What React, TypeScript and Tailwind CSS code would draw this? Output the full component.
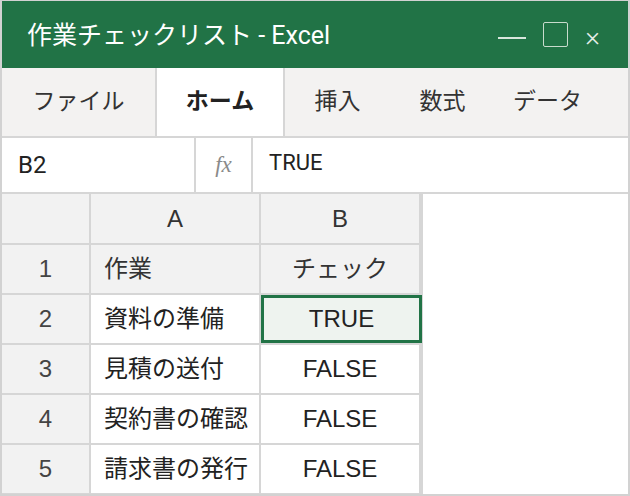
import { Fragment } from 'react';

const UI_FONT = "font-['Roboto','Noto_Sans_CJK_JP',sans-serif]";
const CELL_FONT = "font-['Liberation_Sans','Noto_Sans_CJK_JP',sans-serif]";

const tabs = [
  { label: 'ファイル', width: 'w-[153px]' },
  { label: 'ホーム', width: 'w-[130px]', active: true },
  { label: '挿入', width: 'w-[105px]' },
  { label: '数式', width: 'w-[105px]' },
  { label: 'データ', width: 'w-[105px]' },
];

const rows = [
  { n: '1', task: '作業', check: 'チェック', head: true },
  { n: '2', task: '資料の準備', check: 'TRUE', selected: true },
  { n: '3', task: '見積の送付', check: 'FALSE' },
  { n: '4', task: '契約書の確認', check: 'FALSE' },
  { n: '5', task: '請求書の発行', check: 'FALSE' },
];

export default function App() {
  return (
    <div className={`flex h-[496px] w-[630px] flex-col overflow-hidden border-2 border-t border-[#d2d2d2] bg-white ${UI_FONT}`}>
      {/* title bar */}
      <div className="flex h-[67px] shrink-0 items-center bg-[#217346] pl-[25px] pr-[28px] text-white">
        <span className="mt-[2px] text-[25px]">作業チェックリスト - Excel</span>
        <div className="ml-auto flex items-center">
          <span className="mt-[6px] h-[2px] w-[28px] bg-[#d8e6dc]" />
          <span className="ml-[17px] h-[25px] w-[25px] rounded-[2px] border-[1.5px] border-[#c9dccd]" />
          <span className="ml-[17px] mt-[5px] text-[28px] font-light leading-none text-[#e4eee7]">×</span>
        </div>
      </div>

      {/* ribbon tabs */}
      <div className="flex h-[70px] shrink-0 border-b-2 border-[#d6d6d6] bg-[#f3f2f1] text-[23px] text-[#333]">
        {tabs.map((t) => (
          <div
            key={t.label}
            className={`flex items-center justify-center ${t.width} ${
              t.active ? 'border-x-2 border-[#d6d6d6] bg-white font-bold text-[#222]' : ''
            }`}
          >
            {t.label}
          </div>
        ))}
      </div>

      {/* formula bar */}
      <div className="flex h-[56px] shrink-0 border-b-2 border-[#d6d6d6] text-[#222]">
        <div className="flex w-[194px] items-center border-r-2 border-[#d6d6d6] pl-[16px] text-[24px]">B2</div>
        <div className="flex w-[57px] items-center justify-center border-r-2 border-[#d6d6d6] font-['Liberation_Serif',serif] text-[23px] italic text-[#8a8a8a]">
          fx
        </div>
        <div className="pl-[16px] pt-[8px] text-[22px]">TRUE</div>
      </div>

      {/* sheet grid */}
      <div className={`flex-1 ${CELL_FONT}`}>
        <div className="grid w-[421px] grid-cols-[87px_168px_158px] grid-rows-[49px_repeat(5,48px)] gap-[2px] border-r-2 border-b-2 border-[#d6d6d6] bg-[#d6d6d6] text-[24px] text-[#222]">
          <div className="bg-[#f2f2f2]" />
          <div className="flex items-center justify-center bg-[#f2f2f2] text-[#333]">A</div>
          <div className="flex items-center justify-center bg-[#f2f2f2] text-[#333]">B</div>
          {rows.map((r) => (
            <Fragment key={r.n}>
              <div className="flex items-center justify-center bg-[#f2f2f2] text-[#444]">{r.n}</div>
              <div className={`flex items-center pl-[13px] ${r.head ? 'bg-[#f2f2f2] text-[#333]' : 'bg-white'}`}>
                {r.task}
              </div>
              <div
                className={`flex items-center justify-center ${
                  r.head
                    ? 'bg-[#f2f2f2] text-[#333]'
                    : r.selected
                    ? 'mr-[-3px] border-[3px] border-[#217346] bg-[#eef3ef]'
                    : 'bg-white'
                }`}
              >
                {r.check}
              </div>
            </Fragment>
          ))}
        </div>
      </div>
    </div>
  );
}
